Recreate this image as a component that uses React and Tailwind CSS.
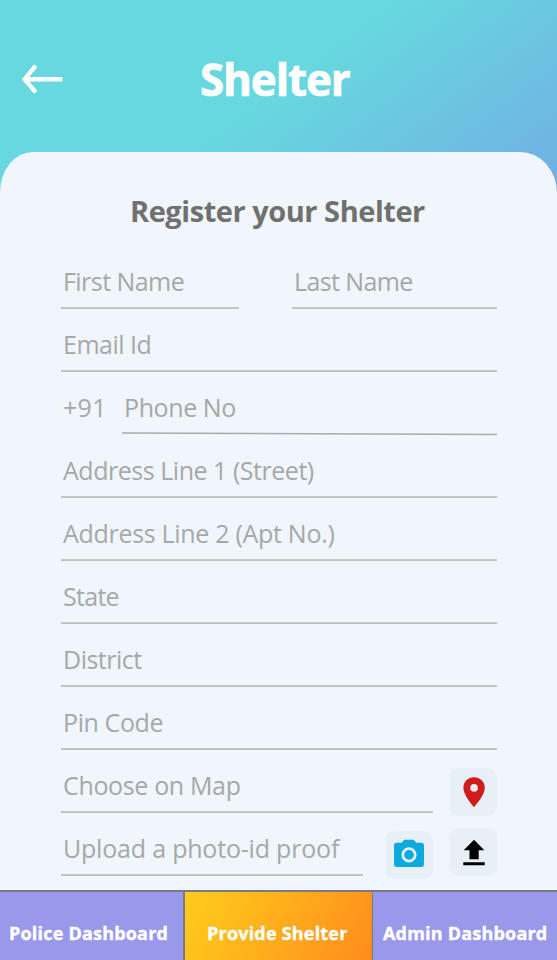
const ICON_BOX = "flex h-12 w-12 shrink-0 items-center justify-center rounded-[10px] bg-[#e7eff7]";

function Field({ label, className = "", text = "" }) {
  return (
    <div className={`h-[63px] pt-[18px] ${className}`}>
      <span className={`block h-[42px] whitespace-nowrap pl-[2px] leading-[34px] ${text}`}>{label}</span>
      <svg className="mt-px block w-full" height="2">
        <rect y="0.3" width="100%" height="1.5" fill="#b0b3b6" />
      </svg>
    </div>
  );
}

function BackArrow() {
  return (
    <svg width="42" height="32" viewBox="0 0 42 32" fill="none" stroke="#fff" strokeWidth="4.4">
      <path d="M14.800 2.600 3.600 16.200 14.800 29.400M3.500 16.300H41.300" />
    </svg>
  );
}

function PinIcon() {
  return (
    <svg width="48" height="48" viewBox="0 0 48 48">
      <path fill="#d11a1a" fillRule="evenodd" d="M25 9.300C19 9.300 14.400 13.900 14.400 19.800 14.400 27.500 25 39.300 25 39.300S35.800 27.500 35.800 19.800C35.800 13.900 31 9.300 25 9.300ZM25.100 16.100a3.800 3.800 0 1 1 0 7.600 3.800 3.800 0 0 1 0-7.600Z" />
    </svg>
  );
}

function CameraIcon() {
  return (
    <svg width="48" height="48" viewBox="0 0 48 48">
      <path fill="#0daae0" d="M19.300 8.700h9.200l2.800 3h5q2.700 0 2.700 2.700v18.800q0 2.700-2.700 2.700H11.700q-2.700 0-2.700-2.700V14.400q0-2.700 2.700-2.700h4.800Z" />
      <circle cx="24" cy="23.900" r="6.200" fill="none" stroke="#e7eff7" strokeWidth="2.700" />
    </svg>
  );
}

function UploadIcon() {
  return (
    <svg width="48" height="48" viewBox="0 0 48 48">
      <path d="M25 11.700 35.400 22.200H29.700V31.300H20.500V22.200H14.700ZM14.300 34.300H35.700V37.300H14.300Z" />
    </svg>
  );
}

export default function App() {
  return (
    <div className="flex h-[960px] w-[557px] flex-col overflow-hidden bg-[#f0f6fb] font-['Open_Sans',sans-serif]">
      <div className="flex flex-1 flex-col bg-[linear-gradient(143deg,#67d8df_0px,#67d8df_236px,#70b1e3_475px)] bg-[length:557px_200px] bg-no-repeat">
        <header className="flex h-[152px] shrink-0 items-start pl-[21px]">
          <div className="mt-[63px]">
            <BackArrow />
          </div>
          <h1 className="ml-[137px] mt-[49px] whitespace-nowrap text-[44px] font-bold leading-[60px] tracking-[-1.15px] text-white [-webkit-text-stroke:0.7px_#fff]">
            Shelter
          </h1>
        </header>

        <main className="flex-1 rounded-tl-[33px_40px] rounded-tr-[37px_41px] bg-[#f0f6fb] pl-[61px] pr-[60px]">
          <h2 className="ml-[69px] mt-[39px] whitespace-nowrap text-[29px] font-bold leading-[40px] tracking-[-0.46px] text-[#707070]">
            Register your Shelter
          </h2>
          <form className="mt-[15px] text-[25px] text-[#a6a8aa]">
            <div className="flex justify-between">
              <Field label="First Name" className="w-[178px]" text="tracking-[-0.55px]" />
              <Field label="Last Name" className="w-[205px]" text="tracking-[-0.6px]" />
            </div>
            <Field label="Email Id" text="tracking-[-0.5px]" />
            <div className="flex h-[63px] pt-[18px]">
              <span className="w-[61px] pl-[2px] leading-[34px] tracking-[0.3px]">+91</span>
              <div className="flex-1">
                <span className="block h-[42px] pl-[2px] leading-[34px] tracking-[-0.4px]">Phone No</span>
                <svg className="block" width="375" height="4" viewBox="0 0 375 4">
                  <path d="M0 1.100 375 2.500" stroke="#a8abae" strokeWidth="1.500" />
                </svg>
              </div>
            </div>
            <Field label="Address Line 1 (Street)" text="tracking-[-0.47px]" />
            <Field label="Address Line 2 (Apt No.)" text="tracking-[-0.3px]" />
            <Field label="State" text="tracking-[-0.7px]" />
            <Field label="District" text="tracking-[-0.5px]" />
            <Field label="Pin Code" text="tracking-[-0.4px]" />
            <div className="flex justify-between">
              <div>
                <Field label="Choose on Map" className="w-[372px]" text="tracking-[-0.35px]" />
                <div className="flex justify-between">
                  <Field label="Upload a photo-id proof" className="w-[302px]" text="tracking-[-0.2px]" />
                  <div className={`${ICON_BOX} mt-[18px]`}>
                    <CameraIcon />
                  </div>
                </div>
              </div>
              <div className="flex flex-col gap-3 pt-[18px]">
                <div className={ICON_BOX}>
                  <PinIcon />
                </div>
                <div className={ICON_BOX}>
                  <UploadIcon />
                </div>
              </div>
            </div>
          </form>
        </main>
      </div>

      <nav className="flex h-[70px] shrink-0 border-t-2 border-[#777983] text-[18px] font-bold tracking-[0.2px] text-white [-webkit-text-stroke:0.4px_#fff]">
        <div className="flex w-[183px] items-center bg-[#9998eb] pl-[9px] pt-[14px]">
          <span className="whitespace-nowrap">Police Dashboard</span>
        </div>
        <div className="flex w-[190px] items-center border-l-2 border-r border-[#777983] bg-[linear-gradient(118deg,#ffcd1c,#ff8c1c)] pl-[22px] pt-[14px]">
          <span className="whitespace-nowrap">Provide Shelter</span>
        </div>
        <div className="flex flex-1 items-center bg-[#9998eb] pl-[10px] pt-[14px]">
          <span className="whitespace-nowrap">Admin Dashboard</span>
        </div>
      </nav>
    </div>
  );
}
